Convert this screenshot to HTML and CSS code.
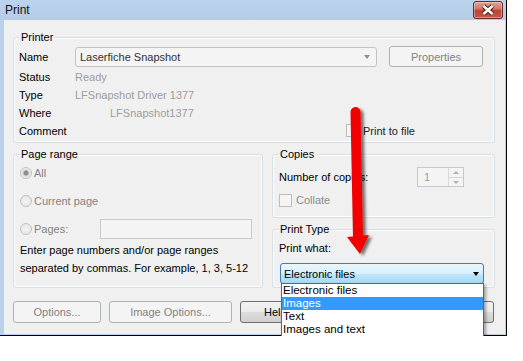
FILE: index.html
```html
<!DOCTYPE html>
<html lang="en">
<head>
    <meta charset="UTF-8">
    <title>Print</title>
    <link rel="stylesheet" href="styles.css">
</head>
<body>
    <div class="window">
        <div class="titlebar">
            <span class="title">Print</span>
            <span class="close-btn">
                <svg width="28" height="16" viewBox="0 0 28 16">
                    <path d="M9.5 4 L18.5 12 M18.5 4 L9.5 12" stroke="#4a1d18" stroke-width="4.6" fill="none"/>
                    <path d="M9.5 4 L18.5 12 M18.5 4 L9.5 12" stroke="#fff" stroke-width="2.6" fill="none"/>
                </svg>
            </span>
        </div>

        <div class="client">
            <div class="group printer">
                <div class="group-title">Printer</div>
                <div class="printer-grid">
                    <span class="label">Name</span>
                    <div class="name-row">
                        <div class="combo">
                            <span>Laserfiche Snapshot</span>
                            <span class="combo-arrow"></span>
                        </div>
                        <span class="btn btn-off props">Properties</span>
                    </div>
                    <span class="label">Status</span>
                    <span class="value">Ready</span>
                    <span class="label">Type</span>
                    <span class="value">LFSnapshot Driver 1377</span>
                    <span class="label">Where</span>
                    <span class="value where">LFSnapshot1377</span>
                    <span class="label">Comment</span>
                    <div class="check print-file"><span class="box"></span>Print to file</div>
                </div>
            </div>

            <div class="lower">
                <div class="group page-range">
                    <div class="group-title">Page range</div>
                    <div class="radios">
                        <div class="radio-row"><span class="radio checked"></span>All</div>
                        <div class="radio-row"><span class="radio"></span>Current page</div>
                        <div class="radio-row"><span class="radio"></span>Pages:<span class="pages-box"></span></div>
                    </div>
                    <p class="hint">Enter page numbers and/or page ranges<br>separated by commas. For example, 1, 3, 5-12</p>
                </div>

                <div class="right-col">
                    <div class="group copies">
                        <div class="group-title">Copies</div>
                        <div class="copies-row">
                            <span>Number of copies:</span>
                            <div class="spinner">
                                <span class="spin-value">1</span>
                                <div class="spin-btns">
                                    <span class="spin-up"></span>
                                    <span class="spin-down"></span>
                                </div>
                            </div>
                        </div>
                        <div class="check collate"><span class="box"></span>Collate</div>
                    </div>

                    <div class="group print-type">
                        <div class="group-title">Print Type</div>
                        <div class="print-what">Print what:</div>
                        <div class="select-wrap">
                            <div class="select">
                                <span>Electronic files</span>
                                <span class="select-arrow"></span>
                            </div>
                            <ul class="dropdown">
                                <li>Electronic files</li>
                                <li class="active">Images</li>
                                <li>Text</li>
                                <li>Images and text</li>
                            </ul>
                        </div>
                    </div>
                </div>
            </div>

            <!-- OK / Cancel sit under the open list, only their edges show -->
            <div class="buttons">
                <span class="btn btn-off w-options">Options...</span>
                <span class="btn btn-off w-image">Image Options...</span>
                <span class="btn w-help">Help</span>
                <span class="btn w-ok"></span>
                <span class="btn w-cancel"></span>
            </div>
        </div>

        <svg class="arrow" width="40" height="165" viewBox="0 0 40 165">
            <defs>
                <filter id="shade" x="-50%" y="-20%" width="200%" height="140%">
                    <feDropShadow dx="3" dy="2" stdDeviation="1.6" flood-color="#000" flood-opacity="0.55"/>
                </filter>
            </defs>
            <g filter="url(#shade)">
                <path d="M15.5 12 L18 138" stroke="#f20000" stroke-width="10" stroke-linecap="round" fill="none"/>
                <polygon points="7,137 29,135 20,154" fill="#f20000"/>
            </g>
        </svg>
    </div>
</body>
</html>
```

FILE: styles.css
```css
body {
    margin: 0;
    background: #fff;
    font-family: "Segoe UI", "Liberation Sans", Arial, sans-serif;
    font-size: 11px;
    color: #000;
}
.window {
    position: relative;
    width: 506px;
    height: 335px;
    background: #b9d1ea;
    border-right: 1px solid #000;
    border-bottom: 1px solid #000;
}
.titlebar {
    height: 20px;
    box-sizing: border-box;
    display: flex;
    justify-content: space-between;
    align-items: flex-start;
    padding: 1px 3px 0 5px;
    background: linear-gradient(#bcd3ec, #b4cce8);
}
.title {
    font-size: 12px;
    line-height: 18px;
    color: #111;
}
.close-btn {
    display: block;
    width: 28px;
    height: 16px;
    border: 1px solid #6b2a22;
    border-radius: 3px;
    background: linear-gradient(#e3a499 0%, #d27a6b 40%, #bd4435 55%, #c65a49 100%);
    box-shadow: inset 0 0 0 1px rgba(255, 255, 255, 0.35);
}
.close-btn svg {
    display: block;
}
.client {
    height: 314px;
    box-sizing: border-box;
    margin: 0 1px 0 4px;
    padding: 17px 10px 0 9px;
    background: #f0f0f0;
}

/* group boxes */
.group {
    border: 1px solid #d5dfe5;
    border-radius: 3px;
    box-shadow: inset 0 0 0 1px #fff;
    padding: 0 6px;
}
.group-title {
    display: table;
    margin: -8px 0 0 0;
    padding: 0 1px;
    line-height: 14px;
    background: #f0f0f0;
}

/* printer */
.printer-grid {
    display: grid;
    grid-template-columns: 56px 1fr;
    grid-template-rows: 23px 18px 18px 18px 17px;
    align-items: center;
    margin: 1px 0 0 -1px;
    padding-bottom: 3px;
}
.value {
    color: #9d9d9d;
}
.value.where {
    padding-left: 35px;
}
.name-row {
    display: flex;
    align-items: center;
    gap: 12px;
}
.combo {
    width: 302px;
    height: 20px;
    box-sizing: border-box;
    display: flex;
    align-items: center;
    justify-content: space-between;
    padding: 0 6px 0 4px;
    border: 1px solid #c3c3c3;
    border-radius: 3px;
    background: #f4f4f4;
    color: #333;
}
.combo-arrow {
    border-top: 4px solid #8f8f8f;
    border-left: 3px solid transparent;
    border-right: 3px solid transparent;
}
.btn {
    display: flex;
    align-items: center;
    justify-content: center;
    height: 22px;
    box-sizing: border-box;
    border: 1px solid #707070;
    border-radius: 3px;
    background: linear-gradient(#f2f2f2 0%, #ebebeb 50%, #dddddd 51%, #cfcfcf 100%);
}
.btn-off {
    border-color: #adb2b5;
    background: #f4f4f4;
    color: #838383;
}
.props {
    width: 94px;
    height: 21px;
}
.check {
    display: flex;
    align-items: center;
    gap: 4px;
}
.box {
    width: 13px;
    height: 13px;
    box-sizing: border-box;
    border: 1px solid #bcbcbc;
    background: #f4f4f4;
}
.print-file {
    padding-left: 271px;
    color: #222;
}

/* lower part */
.lower {
    display: grid;
    grid-template-columns: 250px 223px;
    gap: 9px;
    margin-top: 11px;
}
.right-col {
    display: flex;
    flex-direction: column;
    gap: 11px;
}
.radios {
    display: flex;
    flex-direction: column;
    gap: 8px;
    margin-top: 2px;
}
.radio-row {
    display: flex;
    align-items: center;
    gap: 2px;
    height: 20px;
    color: #838383;
}
.radio {
    width: 12px;
    height: 12px;
    box-sizing: border-box;
    border: 1px solid #c2c2c2;
    border-radius: 50%;
    background: radial-gradient(#f4f4f4, #e2e2e2);
}
.radio.checked {
    background: radial-gradient(circle, #8c8c8c 0, #8c8c8c 2px, #d8d8d8 3px, #efefef 5px);
}
.pages-box {
    width: 152px;
    height: 20px;
    box-sizing: border-box;
    margin: 0 4px 0 auto;
    border: 1px solid #c9c9c9;
    background: #f4f4f4;
}
.hint {
    margin: 2px 0 0;
    line-height: 18px;
    padding-bottom: 8px;
}

/* copies */
.copies-row {
    display: flex;
    align-items: center;
    justify-content: space-between;
    height: 20px;
    margin-top: 6px;
}
.spinner {
    display: flex;
    width: 47px;
    height: 20px;
    box-sizing: border-box;
    margin-right: 24px;
    border: 1px solid #c9c9c9;
    background: #f4f4f4;
}
.spin-value {
    flex: 1;
    padding-left: 6px;
    line-height: 18px;
    color: #9d9d9d;
}
.spin-btns {
    display: flex;
    flex-direction: column;
    width: 14px;
    border-left: 1px solid #d8d8d8;
}
.spin-btns span {
    flex: 1;
    position: relative;
}
.spin-up {
    border-bottom: 1px solid #d8d8d8;
}
.spin-up::after,
.spin-down::after {
    content: "";
    position: absolute;
    left: 4px;
    top: 3px;
    border-left: 3px solid transparent;
    border-right: 3px solid transparent;
}
.spin-up::after {
    border-bottom: 3px solid #b0b0b0;
}
.spin-down::after {
    border-top: 3px solid #b0b0b0;
}
.collate {
    height: 18px;
    margin-top: 4px;
    padding-bottom: 8px;
    color: #8a8a8a;
}

/* print type */
.print-what {
    margin-top: 4px;
    line-height: 16px;
}
.select-wrap {
    position: relative;
    margin: 7px 4px 0 1px;
    padding-bottom: 3px;
}
.select {
    height: 21px;
    box-sizing: border-box;
    display: flex;
    align-items: center;
    justify-content: space-between;
    padding: 0 4px 0 3px;
    border: 1px solid #3c7fb1;
    border-radius: 3px;
    background: linear-gradient(#eaf6fd 0%, #d9f0fc 50%, #bee6fd 51%, #a7d9f5 100%);
}
.select-arrow {
    border-top: 4px solid #000;
    border-left: 3.5px solid transparent;
    border-right: 3.5px solid transparent;
}
.dropdown {
    position: absolute;
    top: 20px;
    left: 1px;
    width: 203px;
    box-sizing: border-box;
    margin: 0;
    padding: 0;
    list-style: none;
    border: 1px solid #646464;
    background: #fff;
    box-shadow: 2px 2px 3px rgba(0, 0, 0, 0.35);
    z-index: 2;
}
.dropdown li {
    height: 13px;
    line-height: 13px;
    padding-left: 1px;
    font-size: 11.5px;
}
.dropdown li.active {
    background: #3399ff;
    color: #fff;
}

/* bottom buttons */
.buttons {
    display: flex;
    gap: 8px;
    margin-top: 13px;
}
.w-options { width: 88px; }
.w-image { width: 123px; }
.w-help {
    width: 75px;
    justify-content: flex-start;
    padding-left: 23px;
}
.w-ok { width: 79px; }
.w-cancel { width: 84px; }

.arrow {
    position: absolute;
    left: 340px;
    top: 100px;
    z-index: 3;
}
```
